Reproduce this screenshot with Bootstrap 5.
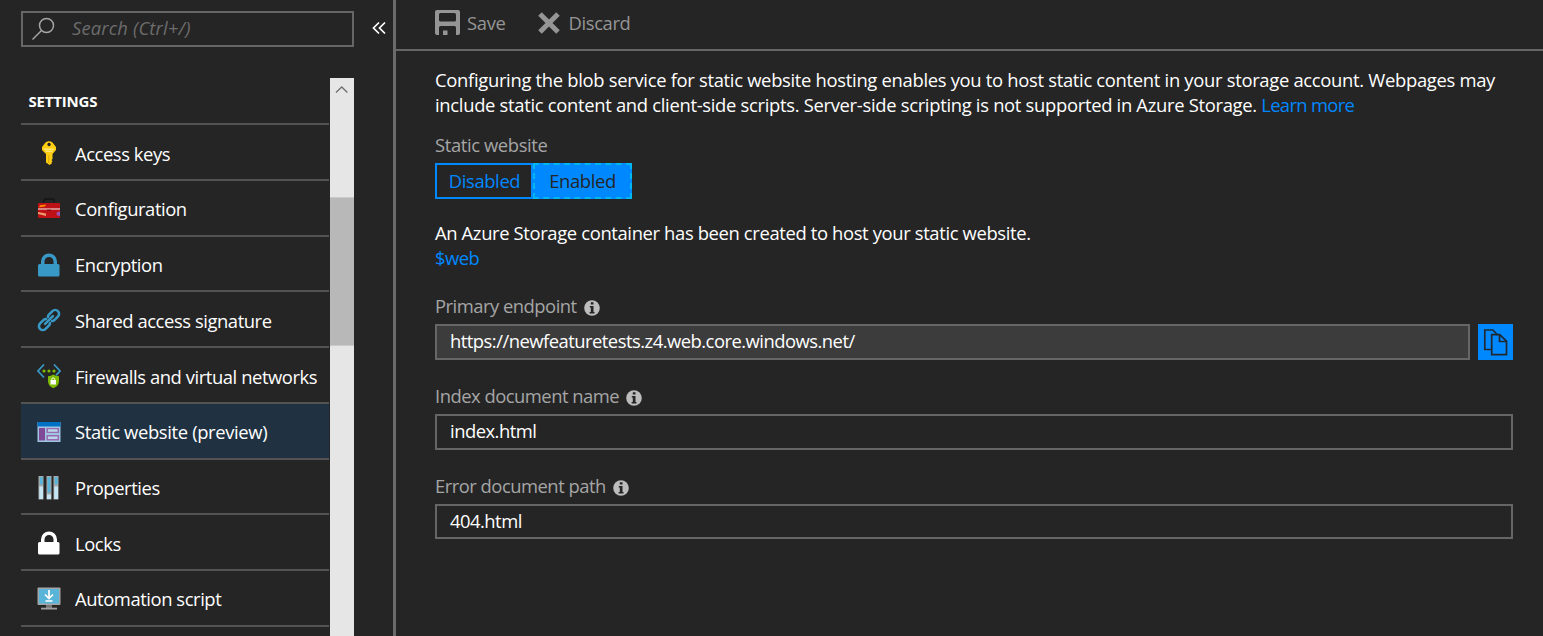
<!DOCTYPE html>
<html lang="en" data-bs-theme="dark">
<head>
<meta charset="utf-8">
<meta name="viewport" content="width=device-width, initial-scale=1">
<title>Static website (preview)</title>
<link href="https://cdn.jsdelivr.net/npm/bootstrap@5.3.0/dist/css/bootstrap.min.css" rel="stylesheet">
<style>
  body { background: #252525; color: #fff; font-family: "Open Sans", "Noto Sans", sans-serif; font-size: 18.4px; line-height: 25px; letter-spacing: -.305px; }
  .blade-menu { width: 396px; border-right: 3px solid #6a6a6a; padding: 11px 0 0 21px; }
  .search-box { width: 333px; height: 36px; border: 2px solid #666; color: #6c6c6c; font-style: italic; padding: 0 0 3px 9px; letter-spacing: .17px; }
  .search-box svg { margin-top: 3px; }
  .collapse-mark { margin: -2px 0 0 18px; }
  .menu-scroll { margin-top: 31px; }
  .menu-list { width: 308px; }
  .menu-heading { height: 47px; border-bottom: 2px solid #535353; padding: 11px 0 0 7.500px; font-size: 15px; font-weight: 700; letter-spacing: -.2px; }
  .menu-list .menu-item { height: 55.78px; border: 0; border-bottom: 2px solid #535353 !important; border-radius: 0; padding: 2.500px 0 0 15.500px; background: transparent; color: #fff; gap: 14.500px; white-space: nowrap; letter-spacing: -.43px; }
  .menu-list .menu-item:last-child { padding-top: 1.500px; }
  .menu-list .menu-item.current { background: #203242; letter-spacing: -.36px; }
  .menu-item svg { width: 24px; height: 24px; }
  .scroll-track { width: 24px; margin-left: 1px; background: #e6e6e6; }
  .scroll-thumb { height: 149px; margin-top: 95px; background: #b8b8b8; border: 1px solid #cacaca; border-width: 1px 0; }
  .toolbar { height: 51px; border-bottom: 2px solid #666; padding: 0 0 4px 39px; color: #959595; }
  .blade-body { padding: 16px 30px 0 39px; }
  .blade-link { color: #0088ff; text-decoration: none; }
  .learn-link { letter-spacing: -.68px; }
  .web-link { letter-spacing: -.5px; }
  .created-note { letter-spacing: -.36px; }
  .field-label { color: #a6a6a6; letter-spacing: -.5px; }
  .field-label svg { margin: 4px 0 0 7px; }
  .field-box { height: 36px; border: 2px solid #666; padding: 0 0 3px 13px; letter-spacing: -.51px; }
  .field-box.locked { background: #3c3c3c; }
  .toggle-btn { height: 36px; border-radius: 0; border: 2px solid #0088ff; color: #0088ff; font-size: inherit; line-height: 32px; padding: 0 0 0 1px; letter-spacing: -.38px; }
  .toggle-btn.chosen { background: #0088ff; color: #252525; border: 2px dashed #00b8f0; padding: 0; }
  .copy-btn { width: 35px; height: 36px; background: #0088ff; border: 0; border-radius: 0; }
</style>
</head>
<body>
<svg class="d-none" xmlns="http://www.w3.org/2000/svg">
  <symbol id="info" viewBox="0 0 16 16"><circle cx="8" cy="8" r="7.8" fill="#bdbdbd"/><path d="M6.800 2.200h2.700v2.400H6.800zM5.800 6h3.700v6h1v1.600H5.600V12h1.200V7.500h-1z" fill="#252525"/></symbol>
  <symbol id="padlock" viewBox="0 0 24 24"><path fill="currentColor" fill-rule="evenodd" d="M4 11V8.500a8 8 0 0 1 16 0V11h1q1.500 0 1.500 1.500V22q0 1.500-1.500 1.500H2.500Q1 23.500 1 22v-9.500Q1 11 2.500 11zM7.500 11h9V8.500a4.500 4.500 0 0 0-9 0z"/></symbol>
</svg>

<div class="d-flex vh-100 overflow-hidden">
  <aside class="blade-menu d-flex flex-column flex-shrink-0">
    <div class="d-flex align-items-center flex-shrink-0">
      <div class="search-box d-flex align-items-center">
        <svg width="24" height="24" viewBox="0 0 24 24" fill="none" stroke="#a6a6a6" stroke-width="1.500"><circle cx="14.500" cy="8.500" r="7"/><path d="M9.500 13.500L.5 22.500"/></svg>
        <span class="ms-3">Search (Ctrl+/)</span>
      </div>
      <svg class="collapse-mark" width="15" height="14" viewBox="0 0 15 14" fill="none" stroke="#fff" stroke-width="1.700"><path d="M7 1.500L1.500 7 7 12.500M13 1.500L7.500 7l5.500 5.500"/></svg>
    </div>
    <div class="menu-scroll d-flex flex-grow-1 overflow-hidden">
      <nav class="menu-list list-group list-group-flush flex-shrink-0">
        <div class="menu-heading flex-shrink-0">SETTINGS</div>
        <a class="menu-item list-group-item d-flex align-items-center flex-shrink-0"><svg viewBox="0 0 24 24"><path fill="#ffcd12" fill-rule="evenodd" d="M8.500 1.500Q12-1 15.500 1.500L19 6v3l-3.500 4v5l-1 1 1 1.200-1 1.200.5.800L12.500 24 9 21.500V13L5 9V6zM12 1.800a1.700 1.700 0 1 0 .1 0z"/><path d="M7 8.200h10M8.500 10.200h7" stroke="#fff0a0" stroke-width="1"/><path d="M11.800 14v8" stroke="#dca900"/></svg><span>Access keys</span></a>
        <a class="menu-item list-group-item d-flex align-items-center flex-shrink-0"><svg viewBox="0 0 24 24"><path d="M7 5.500V3.500q0-1.500 1.500-1.500h7Q17 2 17 3.500v2" fill="none" stroke="#151515" stroke-width="1.500"/><rect x="1" y="6" width="22" height="15" rx="1" fill="#bd1017"/><path d="M1 12h22" stroke="#e9d0cf" stroke-width="1.200"/><path d="M10 13.300h4" stroke="#820c12" stroke-width="1.300"/><path d="M3 8.200l6-.7-1 2-6 .8z" fill="#ff8c00"/><path d="M1 15l8 1.500v2.500l-8-2z" fill="#ed9c69"/><path d="M23 14.500q-3.500 0-3.500 2.300T23 19z" fill="#9b4fb0"/></svg><span>Configuration</span></a>
        <a class="menu-item list-group-item d-flex align-items-center flex-shrink-0"><svg style="color:#3999c6"><use href="#padlock"/></svg><span>Encryption</span></a>
        <a class="menu-item list-group-item d-flex align-items-center flex-shrink-0"><svg viewBox="0 0 24 24" fill="none" stroke="#3999c6" stroke-width="2.800" stroke-linecap="round"><g transform="rotate(-45 12 12) translate(12 12) scale(.92) translate(-12 -12)"><path d="M10.500 9Q9.500 7.800 8 7.800H2.500a4.200 4.200 0 0 0 0 8.400H8q1.500 0 2.500-1.200M13.500 9q1-1.200 2.500-1.200h5.500a4.200 4.200 0 0 1 0 8.400H16q-1.500 0-2.500-1.200"/><path d="M6 12h12"/></g></svg><span>Shared access signature</span></a>
        <a class="menu-item list-group-item d-flex align-items-center flex-shrink-0"><svg viewBox="0 0 24 24"><path d="M7 .5L1 7l6 6.500M17 .5L23 7l-4 4.300" fill="none" stroke="#3999c6" stroke-width="1.700"/><g fill="#7fba00"><circle cx="7" cy="7" r="1.600"/><circle cx="12" cy="7" r="1.600"/><circle cx="17" cy="7" r="1.600"/><path d="M11 12.300q3-.2 5.300-1.800 2.500 1.600 5.700 1.800V17q0 5-5.700 7.200Q11 22 11 17z"/></g><path d="M13.500 16h5.500v4.500h-5.500z" fill="#fff"/><path d="M14.700 16.500v-1a1.500 1.500 0 0 1 3.100 0v1" fill="none" stroke="#fff"/></svg><span>Firewalls and virtual networks</span></a>
        <a class="menu-item current list-group-item d-flex align-items-center flex-shrink-0"><svg viewBox="0 0 24 24"><path d="M.5 2h23v20H.5z" fill="#a0c5e0"/><path d="M.5 2h23v4.500H.5z" fill="#0072c6"/><path d="M2 8h6v12.500H2z" fill="#804998"/><path d="M9.500 8H22v5H9.500zM9.500 15H22v5.500H9.500z" fill="#9a6bb0"/><path d="M11 9.200h9.500v2.600H11zM11 16.500h9.500v2.600H11z" fill="#b9d7eb"/></svg><span>Static website (preview)</span></a>
        <a class="menu-item list-group-item d-flex align-items-center flex-shrink-0"><svg viewBox="0 0 24 24"><path d="M1.500 0H6.500v23.500H1.500zM9.500 0h5v23.500h-5zM16.500 0h5v23.500h-5z" fill="#a9a9a9"/><path d="M2.800 1h3v7.500h-3zM10.500 1h3v15.500h-3zM17.700 1h3v7.500h-3z" fill="#59b4d9"/><path d="M2.300 10.500H6V23H2.300zM10 18.500h4V23h-4zM17.200 10.500H21V23h-3.800z" fill="#c5e5f3"/></svg><span>Properties</span></a>
        <a class="menu-item list-group-item d-flex align-items-center flex-shrink-0"><svg><use href="#padlock"/></svg><span>Locks</span></a>
        <a class="menu-item list-group-item d-flex align-items-center flex-shrink-0"><svg viewBox="0 0 24 24"><rect x=".5" y=".5" width="23" height="17.500" rx="1" fill="#a5a5a5"/><path d="M2 2h20v14.500H2z" fill="#59b4d9"/><path d="M9 18h6v3.500H9z" fill="#777"/><path d="M4 20.700h16v1.800H4z" fill="#a0a0a0"/><path d="M12 3v8M8 7.500l4 4 4-4M8.500 14h7" fill="none" stroke="#fff" stroke-width="1.700"/></svg><span>Automation script</span></a>
      </nav>
      <div class="scroll-track flex-shrink-0">
        <svg class="d-block" width="24" height="24" viewBox="0 0 24 24" fill="none" stroke="#707070" stroke-width="1.300"><path d="M6 14.500L11.700 9l5.700 5.500"/></svg>
        <div class="scroll-thumb"></div>
      </div>
    </div>
  </aside>

  <main class="flex-grow-1">
    <div class="toolbar d-flex align-items-center">
      <svg width="25" height="25" viewBox="0 0 25 25"><path fill="#959595" fill-rule="evenodd" d="M2 0h21q2 0 2 2v21q0 2-2 2h-2v-7.500q0-1.500-1.500-1.500h-14Q4 16 4 17.500V25H2q-2 0-2-2V2Q0 0 2 0zM5.500 3Q4 3 4 4.500V10q0 1.500 1.500 1.500h14q1.500 0 1.500-1.500V4.500Q21 3 19.500 3zM8 20.500h4.500V25H8z"/></svg>
      <span style="margin-left:7px">Save</span>
      <svg style="margin-left:32px" width="22" height="22" viewBox="0 0 22 22"><path d="M2 2l18 18M20 2L2 20" stroke="#959595" stroke-width="5"/></svg>
      <span style="margin-left:9px;letter-spacing:-.4px">Discard</span>
    </div>
    <div class="blade-body">
      <div class="text-nowrap">Configuring the blob service for static website hosting enables you to host static content in your storage account. Webpages may<br>include static content and client-side scripts. Server-side scripting is not supported in Azure Storage. <a class="blade-link learn-link">Learn more</a></div>
      <div class="field-label" style="margin-top:15px;letter-spacing:-.38px">Static website</div>
      <div class="d-flex" style="margin-top:6px">
        <button class="toggle-btn btn" style="width:98px">Disabled</button>
        <button class="toggle-btn chosen btn" style="width:99px">Enabled</button>
      </div>
      <div class="created-note" style="margin-top:21px">An Azure Storage container has been created to host your static website.</div>
      <div><a class="blade-link web-link">$web</a></div>
      <div class="field-label d-flex align-items-center" style="margin-top:23px"><span>Primary endpoint</span><svg width="16" height="16"><use href="#info"/></svg></div>
      <div class="d-flex gap-2" style="margin-top:6px">
        <div class="field-box locked flex-grow-1 d-flex align-items-center"><span>https://newfeaturetests.z4.web.core.windows.net/</span></div>
        <button class="copy-btn btn p-0 d-flex"><svg width="35" height="36" viewBox="0 0 35 36" fill="none" stroke="#202830" stroke-width="1.700"><path d="M13 25.500H6.800V6h8l5 5"/><path d="M13.700 10.700h8l6.800 6.500v13.500H13.700zM21.500 11v6.500h7"/></svg></button>
      </div>
      <div class="field-label d-flex align-items-center" style="margin-top:23px"><span>Index document name</span><svg width="16" height="16"><use href="#info"/></svg></div>
      <div class="field-box d-flex align-items-center" style="margin-top:6px"><span>index.html</span></div>
      <div class="field-label d-flex align-items-center" style="margin-top:23px"><span>Error document path</span><svg width="16" height="16"><use href="#info"/></svg></div>
      <div class="field-box d-flex align-items-center" style="margin-top:6px;height:35px"><span>404.html</span></div>
    </div>
  </main>
</div>
<script src="https://cdn.jsdelivr.net/npm/bootstrap@5.3.0/dist/js/bootstrap.bundle.min.js"></script>
</body>
</html>
